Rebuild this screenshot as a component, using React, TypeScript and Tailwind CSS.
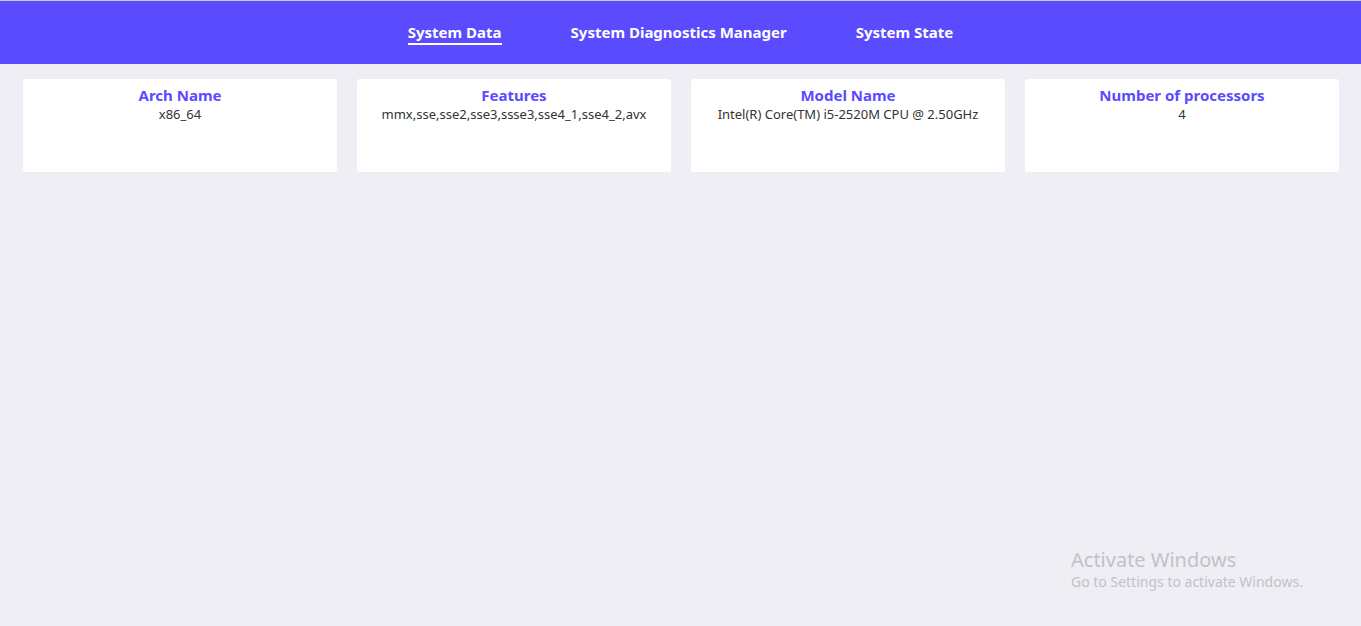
import React from "react";

const navItems = ["System Data", "System Diagnostics Manager", "System State"];

const specs = [
  { title: "Arch Name", value: "x86_64" },
  { title: "Features", value: "mmx,sse,sse2,sse3,ssse3,sse4_1,sse4_2,avx" },
  { title: "Model Name", value: "Intel(R) Core(TM) i5-2520M CPU @ 2.50GHz" },
  { title: "Number of processors", value: "4" },
];

const App = () => {
  return (
    <div
      className="relative min-h-[626px] border-t border-[#c8c8cc] bg-[#efeef5]"
      style={{ fontFamily: '"Noto Sans", "Open Sans", sans-serif' }}
    >
      {/* Top navigation */}
      <nav className="flex h-[63px] items-center justify-center gap-[69px] bg-[#5a4bff] pt-[2px]">
        {navItems.map((item, i) => (
          <span
            key={item}
            className={
              i === 0
                ? "border-b-2 border-white pb-px text-[15px] font-bold leading-[20px] text-white"
                : "pb-[3px] text-[15px] font-bold leading-[20px] text-white"
            }
          >
            {item}
          </span>
        ))}
      </nav>

      {/* System data cards */}
      <div className="grid grid-cols-4 gap-5 pl-[23px] pr-[22px] pt-[15px]">
        {specs.map((spec) => (
          <div
            key={spec.title}
            className="h-[93px] rounded-[3px] bg-white pt-[6px] text-center"
          >
            <h2 className="text-[15px] font-bold leading-[20px] text-[#5a4bff]">
              {spec.title}
            </h2>
            <p className="text-[13px] leading-[18px] text-[#333]">{spec.value}</p>
          </div>
        ))}
      </div>

      {/* Windows activation watermark */}
      <div className="pointer-events-none absolute left-[1071px] top-[547px] text-[#c2c1c8]">
        <div className="text-[20px] leading-[24px]">Activate Windows</div>
        <div className="text-[14px] leading-[20px]">Go to Settings to activate Windows.</div>
      </div>
    </div>
  );
};

export default App;
